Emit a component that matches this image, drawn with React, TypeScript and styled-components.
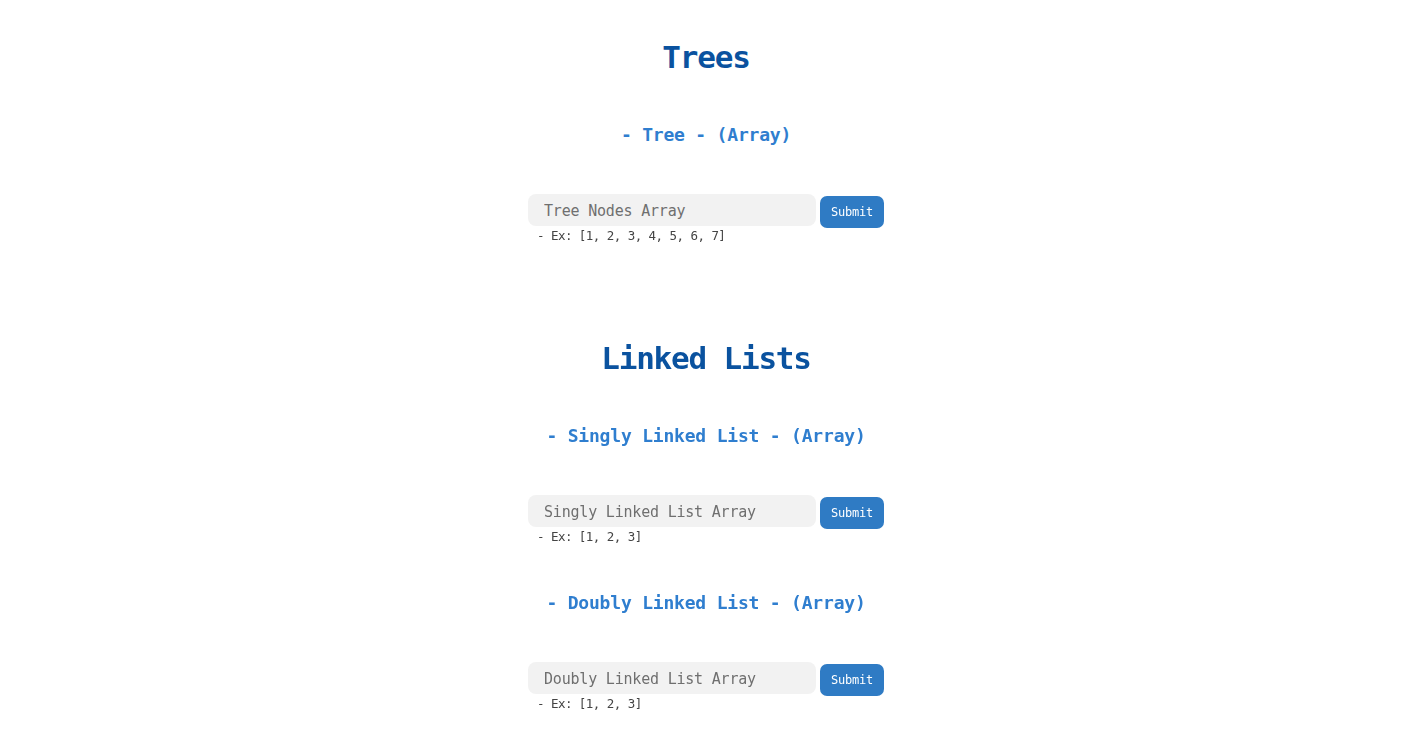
import React from "react";
import styled, { createGlobalStyle } from "styled-components";

const GlobalStyle = createGlobalStyle`
  html, body {
    margin: 0;
    padding: 0;
    background: #ffffff;
  }
  body {
    font-family: "DejaVu Sans Mono", "Liberation Mono", monospace;
  }
`;

const Page = styled.main`
  display: flex;
  flex-direction: column;
  align-items: center;
  padding: 37px 0 40px 11px;
`;

const Section = styled.section<{ $gapTop?: number }>`
  display: flex;
  flex-direction: column;
  align-items: center;
  margin-top: ${(p) => p.$gapTop ?? 0}px;
`;

const Title = styled.h1`
  margin: 0;
  font-size: 31px;
  line-height: 40px;
  letter-spacing: -1.2px;
  font-weight: 700;
  color: #0a529f;
`;

const SubTitle = styled.h3<{ $gapTop: number }>`
  margin: ${(p) => p.$gapTop}px 0 0;
  font-size: 18px;
  line-height: 24px;
  letter-spacing: -0.2px;
  font-weight: 700;
  color: #2f7ecf;
`;

const Block = styled.div`
  display: flex;
  flex-direction: column;
  align-items: stretch;
  margin-top: 47px;
`;

const FormRow = styled.form`
  display: flex;
  align-items: flex-start;
  gap: 4px;
  height: 32px;
`;

const Field = styled.input`
  width: 288px;
  height: 32px;
  box-sizing: border-box;
  border: none;
  outline: none;
  border-radius: 8px;
  background: #f2f2f2;
  padding: 2px 16px 0;
  font-family: "DejaVu Sans Mono", monospace;
  font-size: 15px;
  letter-spacing: -0.2px;
  color: #222;
  caret-color: #000;

  &::placeholder {
    color: #6f6f6f;
  }
`;

const SubmitButton = styled.button`
  margin-top: 2px;
  width: 64px;
  height: 32px;
  border: none;
  border-radius: 7px;
  background: #2f7bc4;
  color: #ffffff;
  font-family: "DejaVu Sans Mono", monospace;
  font-size: 12px;
  letter-spacing: -0.2px;
  cursor: pointer;
  padding: 0;
`;

const Example = styled.p`
  margin: 2px 0 0;
  padding-left: 9px;
  font-size: 12.5px;
  line-height: 16px;
  letter-spacing: -0.55px;
  color: #444;
`;

type Entry = {
  heading: string;
  placeholder: string;
  example: string;
  gapTop: number;
  focus?: boolean;
};

const InputBlock: React.FC<Entry> = ({ heading, placeholder, example, gapTop, focus }) => (
  <>
    <SubTitle $gapTop={gapTop}>{heading}</SubTitle>
    <Block>
      <FormRow onSubmit={(e) => e.preventDefault()}>
        <Field type="text" placeholder={placeholder} autoFocus={focus} />
        <SubmitButton type="submit">Submit</SubmitButton>
      </FormRow>
      <Example>- Ex: {example}</Example>
    </Block>
  </>
);

export default function App() {
  return (
    <>
      <GlobalStyle />
      <Page>
        <Section>
          <Title>Trees</Title>
          <InputBlock
            heading="- Tree - (Array)"
            placeholder="Tree Nodes Array"
            example="[1, 2, 3, 4, 5, 6, 7]"
            gapTop={46}
            focus
          />
        </Section>
        <Section $gapTop={94}>
          <Title>Linked Lists</Title>
          <InputBlock
            heading="- Singly Linked List - (Array)"
            placeholder="Singly Linked List Array"
            example="[1, 2, 3]"
            gapTop={46}
          />
          <InputBlock
            heading="- Doubly Linked List - (Array)"
            placeholder="Doubly Linked List Array"
            example="[1, 2, 3]"
            gapTop={46}
          />
        </Section>
      </Page>
    </>
  );
}
